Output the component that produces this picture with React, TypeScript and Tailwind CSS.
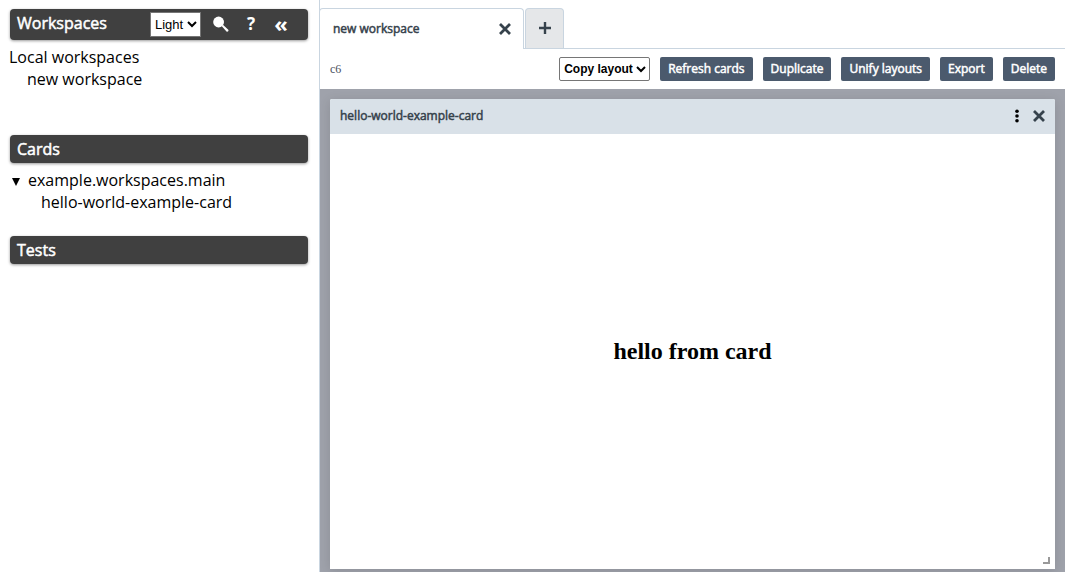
import type { ReactNode } from "react";

const heavy = "[-webkit-text-stroke:0.5px_currentColor]";

function SectionHeader({ title, children }: { title: string; children?: ReactNode }) {
  return (
    <div className="flex items-start rounded bg-[#404040] px-[7px] text-white shadow-[0_1px_3px_rgba(0,0,0,0.4)]">
      <h2 className={`flex-1 text-base leading-7 ${heavy}`}>{title}</h2>
      {children}
    </div>
  );
}

function ToolButton({ children }: { children: string }) {
  return (
    <button type="button" className={`h-6 rounded-xs bg-[#4b5a6d] px-2 pb-px text-xs text-white ${heavy}`}>
      {children}
    </button>
  );
}

function CloseIcon() {
  return (
    <svg viewBox="0 0 12 12" className="size-3" fill="none" stroke="currentColor" strokeWidth="2.8">
      <path d="M1 1 L11 11 M11 1 L1 11" />
    </svg>
  );
}

function Sidebar() {
  return (
    <aside className="w-[319px] shrink-0 pt-[9px] pr-[11px] pl-[10px] text-base leading-[22px] text-black">
      <SectionHeader title="Workspaces">
        <div className="flex h-[31px] items-center">
          <select
            aria-label="Theme"
            className="h-[25px] w-[51px] border border-[#767676] bg-white font-['Liberation_Sans',sans-serif] text-[13px] text-black"
          >
            <option>Light</option>
            <option>Dark</option>
          </select>
          <button type="button" aria-label="Search" className="ml-[11px] flex w-[18px] justify-center">
            <svg viewBox="0 0 18 18" className="size-[18px]" fill="currentColor">
              <circle cx="6.6" cy="6" r="5.4" />
              <path d="M9.6 10 L10.9 8.7 L16.3 13.8 Q16.8 14.7 16.2 15.3 Q15.4 16.1 14.5 15.5 Z" />
            </svg>
          </button>
          <button type="button" aria-label="Help" className="ml-3 flex w-[18px] justify-center pb-[2px]">
            <span className="font-['Noto_Sans',sans-serif] text-[17px] font-bold">?</span>
          </button>
          <button type="button" aria-label="Collapse sidebar" className="mr-[11px] ml-3 flex w-[18px] justify-center pb-[3px]">
            <span className="text-[22px] leading-6 font-bold">«</span>
          </button>
        </div>
      </SectionHeader>
      <div className="-ml-px pt-[6px]">
        <div>Local workspaces</div>
        <a href="#new-workspace" className="ml-[18px] block">new workspace</a>
      </div>
      <div className="mt-[45px]">
        <SectionHeader title="Cards" />
      </div>
      <div className="pt-[6px]">
        <div className="flex items-center">
          <button type="button" aria-label="Collapse namespace" className="flex w-[18px] pl-[2px]">
            <svg viewBox="0 0 8 8" className="mt-[3px] size-2" fill="currentColor">
              <path d="M0 0 H8 L4 8 Z" />
            </svg>
          </button>
          <span>example.workspaces.main</span>
        </div>
        <a href="#hello-world-example-card" className="ml-[31px] block">hello-world-example-card</a>
      </div>
      <div className="mt-[23px]">
        <SectionHeader title="Tests" />
      </div>
    </aside>
  );
}

function Tabs() {
  return (
    <div className="flex h-[41px] items-end gap-px border-b border-[#c9d5e0] text-[#36424c]">
      <div className="-mb-px -ml-px flex h-[41px] w-[205px] items-center justify-between rounded-t border border-b-0 border-[#c9d5e0] bg-white pr-3 pb-px pl-[13px]">
        <span className={`text-xs ${heavy}`}>new workspace</span>
        <button type="button" aria-label="Close workspace">
          <CloseIcon />
        </button>
      </div>
      <button
        type="button"
        aria-label="Add workspace"
        className="flex h-10 w-[39px] items-center justify-center rounded-t border border-b-0 border-[#c9d5e0] bg-[#e5e7e9] pb-[2px]"
      >
        <svg viewBox="0 0 12 12" className="size-3" fill="none" stroke="currentColor" strokeWidth="2.4">
          <path d="M6 0 V12 M0 6 H12" />
        </svg>
      </button>
    </div>
  );
}

export default function App() {
  return (
    <div className="flex h-screen min-h-80 bg-white font-['Open_Sans','Noto_Sans',sans-serif]">
      <Sidebar />
      <main className="flex min-w-0 flex-1 flex-col border-l border-[#c9d5e0] pt-2">
        <Tabs />
        <div className="flex h-10 shrink-0 items-center gap-[10px] px-[10px]">
          <span className="flex-1 font-['Liberation_Serif',serif] text-xs text-[#4b5160]">c6</span>
          <select
            aria-label="Copy layout"
            className="h-6 w-[91px] rounded-xs border border-[#767676] bg-white font-['Liberation_Sans',sans-serif] text-xs font-bold text-black"
          >
            <option>Copy layout</option>
          </select>
          <ToolButton>Refresh cards</ToolButton>
          <ToolButton>Duplicate</ToolButton>
          <ToolButton>Unify layouts</ToolButton>
          <ToolButton>Export</ToolButton>
          <ToolButton>Delete</ToolButton>
        </div>
        <div className="flex min-h-0 flex-1 flex-col bg-[#9fa2ab] px-[10px] pt-[10px] pb-[3px]">
          <section className="flex flex-1 flex-col rounded-t-xs bg-white shadow-[0_2px_12px_rgba(0,0,0,0.12)]">
            <header className="flex h-[35px] shrink-0 items-center rounded-t-xs bg-[#d9e1e8] px-[10px] pb-px text-[#36424c]">
              <h3 className={`flex-1 text-xs ${heavy}`}>hello-world-example-card</h3>
              <button type="button" aria-label="Card menu" className="mr-[14px] text-black">
                <svg viewBox="0 0 4 14" className="h-[14px] w-1" fill="currentColor">
                  <circle cx="2" cy="2.2" r="1.8" />
                  <circle cx="2" cy="7" r="1.8" />
                  <circle cx="2" cy="11.8" r="1.8" />
                </svg>
              </button>
              <button type="button" aria-label="Close card">
                <CloseIcon />
              </button>
            </header>
            <div className="relative flex flex-1 items-center justify-center pb-[2px]">
              <h1 className="font-['Liberation_Serif',serif] text-2xl font-bold text-black">hello from card</h1>
              <svg viewBox="0 0 7 7" className="absolute right-[5px] bottom-[5px] size-[7px]" fill="none" stroke="#999" strokeWidth="2">
                <path d="M6 0 V6 H0" />
              </svg>
            </div>
          </section>
        </div>
      </main>
    </div>
  );
}
